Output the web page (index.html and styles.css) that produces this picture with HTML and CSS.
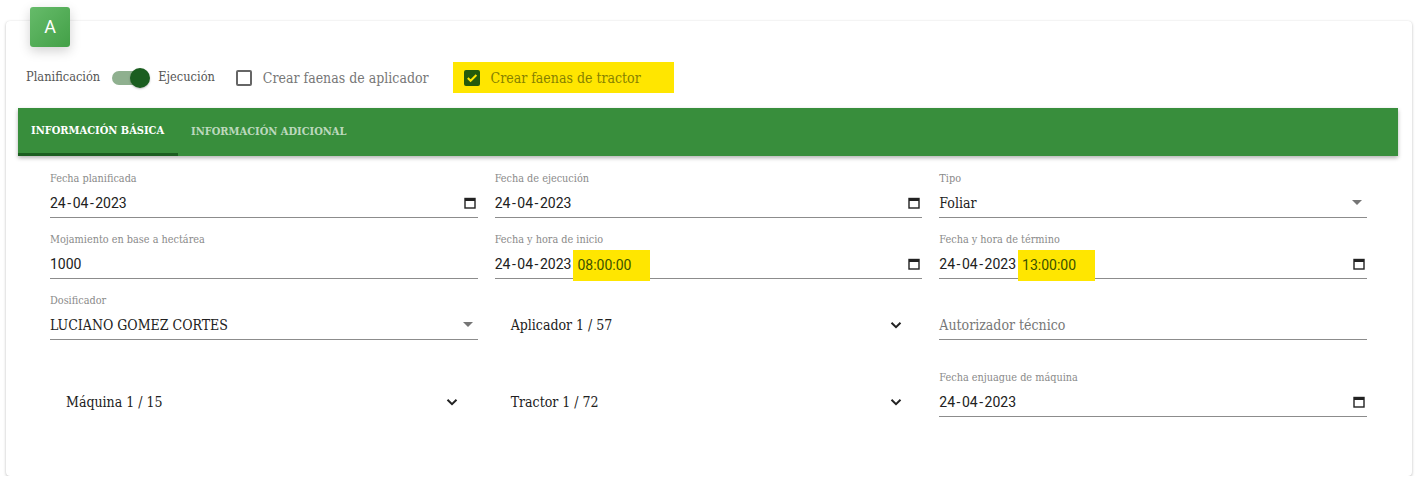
FILE: index.html
```
<!DOCTYPE html>
<html>
  <head>
    <meta charset="utf-8">
    <link rel="stylesheet" href="styles.css">
  </head>
  <body>
    <div class="card">
      <div class="badge">A</div>

      <div class="options">
        <span class="opt-label">Planificación</span>
        <span class="toggle"><span class="track"></span><span class="knob"></span></span>
        <span class="opt-label">Ejecución</span>
        <label class="check-opt">
          <span class="box"></span>
          <span>Crear faenas de aplicador</span>
        </label>
        <label class="check-opt marked">
          <span class="box checked">
            <svg width="12" height="12" viewBox="0 0 12 12"><path d="M1.8 6l2.8 2.8L10.4 3" fill="none" stroke="#ffe600" stroke-width="2"/></svg>
          </span>
          <span>Crear faenas de tractor</span>
        </label>
      </div>

      <div class="tabs">
        <div class="tab active">Información básica</div>
        <div class="tab">Información adicional</div>
      </div>

      <div class="form">
        <div class="field">
          <div class="label">Fecha planificada</div>
          <div class="value date"><span>24<i>-</i>04<i>-</i>2023</span><svg class="cal" viewBox="0 0 12 12"><rect x="1" y="1.5" width="10" height="9.5" fill="none" stroke="#222" stroke-width="1.4"/><rect x="1" y="1.5" width="10" height="2.5" fill="#222"/></svg></div>
        </div>
        <div class="field">
          <div class="label">Fecha de ejecución</div>
          <div class="value date"><span>24<i>-</i>04<i>-</i>2023</span><svg class="cal" viewBox="0 0 12 12"><rect x="1" y="1.5" width="10" height="9.5" fill="none" stroke="#222" stroke-width="1.4"/><rect x="1" y="1.5" width="10" height="2.5" fill="#222"/></svg></div>
        </div>
        <div class="field">
          <div class="label">Tipo</div>
          <div class="value slab"><span>Foliar</span><span class="tri"></span></div>
        </div>

        <div class="field">
          <div class="label">Mojamiento en base a hectárea</div>
          <div class="value date"><span>1000</span></div>
        </div>
        <div class="field">
          <div class="label">Fecha y hora de inicio</div>
          <div class="value date"><span>24<i>-</i>04<i>-</i>2023<b class="hl">08:00:00</b></span><svg class="cal" viewBox="0 0 12 12"><rect x="1" y="1.5" width="10" height="9.5" fill="none" stroke="#222" stroke-width="1.4"/><rect x="1" y="1.5" width="10" height="2.5" fill="#222"/></svg></div>
        </div>
        <div class="field">
          <div class="label">Fecha y hora de término</div>
          <div class="value date"><span>24<i>-</i>04<i>-</i>2023<b class="hl">13:00:00</b></span><svg class="cal" viewBox="0 0 12 12"><rect x="1" y="1.5" width="10" height="9.5" fill="none" stroke="#222" stroke-width="1.4"/><rect x="1" y="1.5" width="10" height="2.5" fill="#222"/></svg></div>
        </div>

        <div class="field">
          <div class="label">Dosificador</div>
          <div class="value slab"><span>LUCIANO GOMEZ CORTES</span><span class="tri"></span></div>
        </div>
        <div class="field">
          <div class="label"></div>
          <div class="value slab plain"><span>Aplicador 1 / 57</span><svg class="chev" viewBox="0 0 12 8"><path d="M1.5 1.8L6 6.2l4.5-4.4" fill="none" stroke="#222" stroke-width="2"/></svg></div>
        </div>
        <div class="field">
          <div class="label"></div>
          <div class="value slab"><span class="placeholder">Autorizador técnico</span></div>
        </div>

        <div class="field">
          <div class="label"></div>
          <div class="value slab plain"><span>Máquina 1 / 15</span><svg class="chev" viewBox="0 0 12 8"><path d="M1.5 1.8L6 6.2l4.5-4.4" fill="none" stroke="#222" stroke-width="2"/></svg></div>
        </div>
        <div class="field">
          <div class="label"></div>
          <div class="value slab plain"><span>Tractor 1 / 72</span><svg class="chev" viewBox="0 0 12 8"><path d="M1.5 1.8L6 6.2l4.5-4.4" fill="none" stroke="#222" stroke-width="2"/></svg></div>
        </div>
        <div class="field">
          <div class="label">Fecha enjuague de máquina</div>
          <div class="value date"><span>24<i>-</i>04<i>-</i>2023</span><svg class="cal" viewBox="0 0 12 12"><rect x="1" y="1.5" width="10" height="9.5" fill="none" stroke="#222" stroke-width="1.4"/><rect x="1" y="1.5" width="10" height="2.5" fill="#222"/></svg></div>
        </div>
      </div>
    </div>
  </body>
</html>
```

FILE: styles.css
```
body {
    margin: 0;
    background: #fff;
    font-family: "Roboto Slab", "DejaVu Serif Condensed", "DejaVu Serif", serif;
    color: #212121;
}
.card {
    position: relative;
    margin: 21px 7px 0 6px;
    height: 455px;
    box-sizing: border-box;
    padding-top: 41px;
    background: #fff;
    border-radius: 4px;
    box-shadow: 0 1px 3px rgba(0, 0, 0, 0.25), 0 0 1px rgba(0, 0, 0, 0.08);
}
.badge {
    position: absolute;
    top: -14px;
    left: 24px;
    width: 40px;
    height: 40px;
    border-radius: 3px;
    background: linear-gradient(135deg, #66bb6a, #43a047);
    box-shadow: 0 4px 12px rgba(0, 0, 0, 0.18);
    color: #fff;
    font-family: Roboto, sans-serif;
    font-size: 18px;
    line-height: 40px;
    text-align: center;
}
.options {
    display: flex;
    align-items: center;
    height: 31px;
    padding-left: 20px;
}
.opt-label {
    font-size: 12.7px;
    color: #555;
    margin-top: -2px;
}
.toggle {
    position: relative;
    width: 38px;
    height: 20px;
    margin: 0 8px 0 12px;
}
.toggle .track {
    position: absolute;
    left: 0;
    top: 3px;
    width: 34px;
    height: 14px;
    border-radius: 7px;
    background: #8fb08f;
}
.toggle .knob {
    position: absolute;
    right: 0;
    top: 0;
    width: 20px;
    height: 20px;
    border-radius: 50%;
    background: #1b5e20;
    box-shadow: 0 1px 2px rgba(0, 0, 0, 0.25);
}
.check-opt {
    display: flex;
    align-items: center;
    height: 31px;
    font-size: 14px;
    color: #777;
    margin-left: 21px;
    white-space: nowrap;
}
.check-opt .box {
    width: 12px;
    height: 12px;
    border: 2px solid #666;
    border-radius: 2px;
    margin-right: 11px;
    display: flex;
    align-items: center;
    justify-content: center;
}
.check-opt .box.checked {
    background: #245a0c;
    border-color: #245a0c;
}
.check-opt.marked {
    margin-left: 24px;
    padding: 0 33px 0 11px;
    background: #ffe600;
    color: #868100;
}
.tabs {
    display: flex;
    height: 48px;
    margin: 15px 14px 0 12px;
    background: #388e3c;
    box-shadow: 0 2px 4px rgba(0, 0, 0, 0.3);
}
.tab {
    padding: 0 12px 0 13px;
    line-height: 48px;
    font-size: 11px;
    font-weight: bold;
    text-transform: uppercase;
    white-space: nowrap;
    color: rgba(255, 255, 255, 0.68);
    box-sizing: border-box;
}
.tab.active {
    color: #fff;
    border-bottom: 3px solid #1b5e20;
    line-height: 45px;
    width: 160px;
}
.form {
    display: grid;
    grid-template-columns: repeat(3, 1fr);
    grid-template-rows: 47px 47px 63px 47px;
    column-gap: 17px;
    row-gap: 14px;
    margin: 0 14px 0 12px;
    padding: 16px 31px 0 32px;
}
.label {
    height: 14px;
    line-height: 14px;
    font-size: 10.8px;
    color: #8a8a8a;
}
.value {
    display: flex;
    align-items: center;
    justify-content: space-between;
    height: 32px;
    padding-top: 2px;
    box-sizing: border-box;
    border-bottom: 1px solid #8c8c8c;
    font-size: 14px;
}
.value.date {
    font-family: Roboto, sans-serif;
}
.value.date i {
    font-style: normal;
    padding: 0 1.5px;
}
.value.plain {
    border-bottom: none;
    padding: 2px 20px 0 16px;
    height: 32px;
}
.placeholder {
    color: #777;
}
.hl {
    display: inline-block;
    font-weight: normal;
    background: #ffe600;
    color: #3c5200;
    height: 31px;
    line-height: 31px;
    padding: 0 19px 0 4px;
    margin: -14px 0 -16px 2px;
    vertical-align: middle;
}
.cal {
    width: 12px;
    height: 12px;
    margin-right: 2px;
}
.tri {
    width: 0;
    height: 0;
    border-left: 5px solid transparent;
    border-right: 5px solid transparent;
    border-top: 5px solid #757575;
    margin-right: 5px;
}
.chev {
    width: 12px;
    height: 8px;
}
```
